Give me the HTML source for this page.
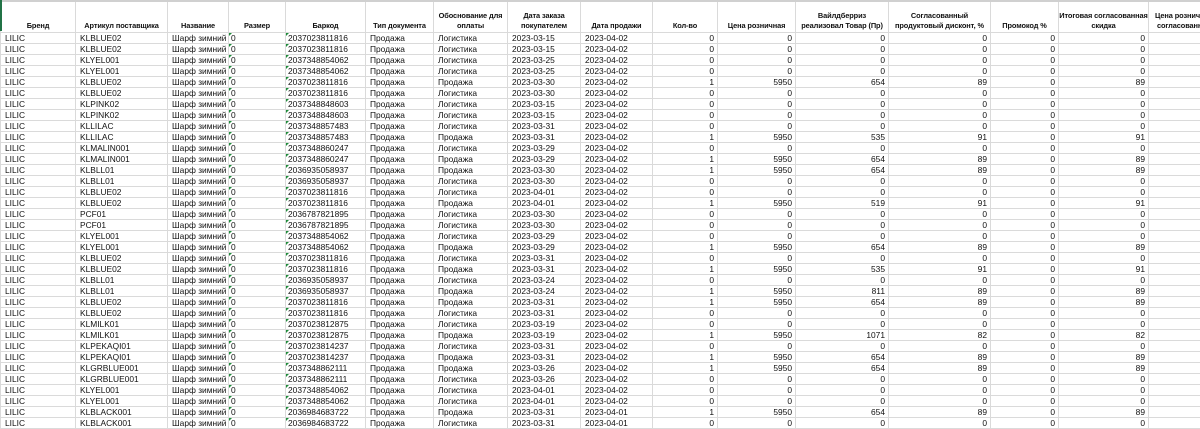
<!DOCTYPE html>
<html><head><meta charset="utf-8"><style>
body{margin:0;background:#fff;width:1200px;height:421px;overflow:hidden;position:relative;font-family:"Liberation Sans","DejaVu Sans",sans-serif;}
.top{position:absolute;left:0;top:0;width:1200px;height:2px;background:#d0d0d0}
.gl{position:absolute;left:0;top:0;width:2px;height:31px;background:#217346}
table{position:absolute;left:0;top:0;border-collapse:collapse;table-layout:fixed;width:1250px}
td{border:1px solid #dadada;height:10px;padding:0 2px 0 4px;font-size:8.4px;line-height:10px;white-space:nowrap;overflow:hidden;color:#111}
tr.h td{height:30px;font-weight:bold;text-align:center;vertical-align:bottom;white-space:nowrap;line-height:10px;padding:0 0 1px 0;font-size:7.4px;letter-spacing:-0.1px}
td.n{text-align:right;padding-right:3px}
td.g{position:relative}
td.g:before{content:"";position:absolute;left:0;top:0;border-top:3px solid #1e8c3a;border-right:3px solid transparent}
td.z{padding-left:2px}
</style></head><body>
<table>
<colgroup><col style="width:75px"><col style="width:92px"><col style="width:61px"><col style="width:57px"><col style="width:80px"><col style="width:68px"><col style="width:74px"><col style="width:73px"><col style="width:72px"><col style="width:65px"><col style="width:78px"><col style="width:93px"><col style="width:102px"><col style="width:68px"><col style="width:90px"><col style="width:102px"></colgroup>
<tr class="h"><td>Бренд</td><td>Артикул поставщика</td><td>Название</td><td>Размер</td><td>Баркод</td><td>Тип документа</td><td>Обоснование для<br>оплаты</td><td>Дата заказа<br>покупателем</td><td>Дата продажи</td><td>Кол-во</td><td>Цена розничная</td><td>Вайлдберриз<br>реализовал Товар (Пр)</td><td>Согласованный<br>продуктовый дисконт, %</td><td>Промокод %</td><td>Итоговая согласованная<br>скидка</td><td style="text-align:left;padding-left:6px">Цена розничная с<br>&nbsp;согласованной</td></tr>
<tr><td>LILIC</td><td>KLBLUE02</td><td>Шарф зимний оф</td><td class="g z">0</td><td class="g z">2037023811816</td><td>Продажа</td><td>Логистика</td><td>2023-03-15</td><td>2023-04-02</td><td class="n">0</td><td class="n">0</td><td class="n">0</td><td class="n">0</td><td class="n">0</td><td class="n">0</td><td></td></tr>
<tr><td>LILIC</td><td>KLBLUE02</td><td>Шарф зимний оф</td><td class="g z">0</td><td class="g z">2037023811816</td><td>Продажа</td><td>Логистика</td><td>2023-03-15</td><td>2023-04-02</td><td class="n">0</td><td class="n">0</td><td class="n">0</td><td class="n">0</td><td class="n">0</td><td class="n">0</td><td></td></tr>
<tr><td>LILIC</td><td>KLYEL001</td><td>Шарф зимний оф</td><td class="g z">0</td><td class="g z">2037348854062</td><td>Продажа</td><td>Логистика</td><td>2023-03-25</td><td>2023-04-02</td><td class="n">0</td><td class="n">0</td><td class="n">0</td><td class="n">0</td><td class="n">0</td><td class="n">0</td><td></td></tr>
<tr><td>LILIC</td><td>KLYEL001</td><td>Шарф зимний оф</td><td class="g z">0</td><td class="g z">2037348854062</td><td>Продажа</td><td>Логистика</td><td>2023-03-25</td><td>2023-04-02</td><td class="n">0</td><td class="n">0</td><td class="n">0</td><td class="n">0</td><td class="n">0</td><td class="n">0</td><td></td></tr>
<tr><td>LILIC</td><td>KLBLUE02</td><td>Шарф зимний оф</td><td class="g z">0</td><td class="g z">2037023811816</td><td>Продажа</td><td>Продажа</td><td>2023-03-30</td><td>2023-04-02</td><td class="n">1</td><td class="n">5950</td><td class="n">654</td><td class="n">89</td><td class="n">0</td><td class="n">89</td><td></td></tr>
<tr><td>LILIC</td><td>KLBLUE02</td><td>Шарф зимний оф</td><td class="g z">0</td><td class="g z">2037023811816</td><td>Продажа</td><td>Логистика</td><td>2023-03-30</td><td>2023-04-02</td><td class="n">0</td><td class="n">0</td><td class="n">0</td><td class="n">0</td><td class="n">0</td><td class="n">0</td><td></td></tr>
<tr><td>LILIC</td><td>KLPINK02</td><td>Шарф зимний оф</td><td class="g z">0</td><td class="g z">2037348848603</td><td>Продажа</td><td>Логистика</td><td>2023-03-15</td><td>2023-04-02</td><td class="n">0</td><td class="n">0</td><td class="n">0</td><td class="n">0</td><td class="n">0</td><td class="n">0</td><td></td></tr>
<tr><td>LILIC</td><td>KLPINK02</td><td>Шарф зимний оф</td><td class="g z">0</td><td class="g z">2037348848603</td><td>Продажа</td><td>Логистика</td><td>2023-03-15</td><td>2023-04-02</td><td class="n">0</td><td class="n">0</td><td class="n">0</td><td class="n">0</td><td class="n">0</td><td class="n">0</td><td></td></tr>
<tr><td>LILIC</td><td>KLLILAC</td><td>Шарф зимний оф</td><td class="g z">0</td><td class="g z">2037348857483</td><td>Продажа</td><td>Логистика</td><td>2023-03-31</td><td>2023-04-02</td><td class="n">0</td><td class="n">0</td><td class="n">0</td><td class="n">0</td><td class="n">0</td><td class="n">0</td><td></td></tr>
<tr><td>LILIC</td><td>KLLILAC</td><td>Шарф зимний оф</td><td class="g z">0</td><td class="g z">2037348857483</td><td>Продажа</td><td>Продажа</td><td>2023-03-31</td><td>2023-04-02</td><td class="n">1</td><td class="n">5950</td><td class="n">535</td><td class="n">91</td><td class="n">0</td><td class="n">91</td><td></td></tr>
<tr><td>LILIC</td><td>KLMALIN001</td><td>Шарф зимний оф</td><td class="g z">0</td><td class="g z">2037348860247</td><td>Продажа</td><td>Логистика</td><td>2023-03-29</td><td>2023-04-02</td><td class="n">0</td><td class="n">0</td><td class="n">0</td><td class="n">0</td><td class="n">0</td><td class="n">0</td><td></td></tr>
<tr><td>LILIC</td><td>KLMALIN001</td><td>Шарф зимний оф</td><td class="g z">0</td><td class="g z">2037348860247</td><td>Продажа</td><td>Продажа</td><td>2023-03-29</td><td>2023-04-02</td><td class="n">1</td><td class="n">5950</td><td class="n">654</td><td class="n">89</td><td class="n">0</td><td class="n">89</td><td></td></tr>
<tr><td>LILIC</td><td>KLBLL01</td><td>Шарф зимний оф</td><td class="g z">0</td><td class="g z">2036935058937</td><td>Продажа</td><td>Продажа</td><td>2023-03-30</td><td>2023-04-02</td><td class="n">1</td><td class="n">5950</td><td class="n">654</td><td class="n">89</td><td class="n">0</td><td class="n">89</td><td></td></tr>
<tr><td>LILIC</td><td>KLBLL01</td><td>Шарф зимний оф</td><td class="g z">0</td><td class="g z">2036935058937</td><td>Продажа</td><td>Логистика</td><td>2023-03-30</td><td>2023-04-02</td><td class="n">0</td><td class="n">0</td><td class="n">0</td><td class="n">0</td><td class="n">0</td><td class="n">0</td><td></td></tr>
<tr><td>LILIC</td><td>KLBLUE02</td><td>Шарф зимний оф</td><td class="g z">0</td><td class="g z">2037023811816</td><td>Продажа</td><td>Логистика</td><td>2023-04-01</td><td>2023-04-02</td><td class="n">0</td><td class="n">0</td><td class="n">0</td><td class="n">0</td><td class="n">0</td><td class="n">0</td><td></td></tr>
<tr><td>LILIC</td><td>KLBLUE02</td><td>Шарф зимний оф</td><td class="g z">0</td><td class="g z">2037023811816</td><td>Продажа</td><td>Продажа</td><td>2023-04-01</td><td>2023-04-02</td><td class="n">1</td><td class="n">5950</td><td class="n">519</td><td class="n">91</td><td class="n">0</td><td class="n">91</td><td></td></tr>
<tr><td>LILIC</td><td>PCF01</td><td>Шарф зимний оф</td><td class="g z">0</td><td class="g z">2036787821895</td><td>Продажа</td><td>Логистика</td><td>2023-03-30</td><td>2023-04-02</td><td class="n">0</td><td class="n">0</td><td class="n">0</td><td class="n">0</td><td class="n">0</td><td class="n">0</td><td></td></tr>
<tr><td>LILIC</td><td>PCF01</td><td>Шарф зимний оф</td><td class="g z">0</td><td class="g z">2036787821895</td><td>Продажа</td><td>Логистика</td><td>2023-03-30</td><td>2023-04-02</td><td class="n">0</td><td class="n">0</td><td class="n">0</td><td class="n">0</td><td class="n">0</td><td class="n">0</td><td></td></tr>
<tr><td>LILIC</td><td>KLYEL001</td><td>Шарф зимний оф</td><td class="g z">0</td><td class="g z">2037348854062</td><td>Продажа</td><td>Логистика</td><td>2023-03-29</td><td>2023-04-02</td><td class="n">0</td><td class="n">0</td><td class="n">0</td><td class="n">0</td><td class="n">0</td><td class="n">0</td><td></td></tr>
<tr><td>LILIC</td><td>KLYEL001</td><td>Шарф зимний оф</td><td class="g z">0</td><td class="g z">2037348854062</td><td>Продажа</td><td>Продажа</td><td>2023-03-29</td><td>2023-04-02</td><td class="n">1</td><td class="n">5950</td><td class="n">654</td><td class="n">89</td><td class="n">0</td><td class="n">89</td><td></td></tr>
<tr><td>LILIC</td><td>KLBLUE02</td><td>Шарф зимний оф</td><td class="g z">0</td><td class="g z">2037023811816</td><td>Продажа</td><td>Логистика</td><td>2023-03-31</td><td>2023-04-02</td><td class="n">0</td><td class="n">0</td><td class="n">0</td><td class="n">0</td><td class="n">0</td><td class="n">0</td><td></td></tr>
<tr><td>LILIC</td><td>KLBLUE02</td><td>Шарф зимний оф</td><td class="g z">0</td><td class="g z">2037023811816</td><td>Продажа</td><td>Продажа</td><td>2023-03-31</td><td>2023-04-02</td><td class="n">1</td><td class="n">5950</td><td class="n">535</td><td class="n">91</td><td class="n">0</td><td class="n">91</td><td></td></tr>
<tr><td>LILIC</td><td>KLBLL01</td><td>Шарф зимний оф</td><td class="g z">0</td><td class="g z">2036935058937</td><td>Продажа</td><td>Логистика</td><td>2023-03-24</td><td>2023-04-02</td><td class="n">0</td><td class="n">0</td><td class="n">0</td><td class="n">0</td><td class="n">0</td><td class="n">0</td><td></td></tr>
<tr><td>LILIC</td><td>KLBLL01</td><td>Шарф зимний оф</td><td class="g z">0</td><td class="g z">2036935058937</td><td>Продажа</td><td>Продажа</td><td>2023-03-24</td><td>2023-04-02</td><td class="n">1</td><td class="n">5950</td><td class="n">811</td><td class="n">89</td><td class="n">0</td><td class="n">89</td><td></td></tr>
<tr><td>LILIC</td><td>KLBLUE02</td><td>Шарф зимний оф</td><td class="g z">0</td><td class="g z">2037023811816</td><td>Продажа</td><td>Продажа</td><td>2023-03-31</td><td>2023-04-02</td><td class="n">1</td><td class="n">5950</td><td class="n">654</td><td class="n">89</td><td class="n">0</td><td class="n">89</td><td></td></tr>
<tr><td>LILIC</td><td>KLBLUE02</td><td>Шарф зимний оф</td><td class="g z">0</td><td class="g z">2037023811816</td><td>Продажа</td><td>Логистика</td><td>2023-03-31</td><td>2023-04-02</td><td class="n">0</td><td class="n">0</td><td class="n">0</td><td class="n">0</td><td class="n">0</td><td class="n">0</td><td></td></tr>
<tr><td>LILIC</td><td>KLMILK01</td><td>Шарф зимний оф</td><td class="g z">0</td><td class="g z">2037023812875</td><td>Продажа</td><td>Логистика</td><td>2023-03-19</td><td>2023-04-02</td><td class="n">0</td><td class="n">0</td><td class="n">0</td><td class="n">0</td><td class="n">0</td><td class="n">0</td><td></td></tr>
<tr><td>LILIC</td><td>KLMILK01</td><td>Шарф зимний оф</td><td class="g z">0</td><td class="g z">2037023812875</td><td>Продажа</td><td>Продажа</td><td>2023-03-19</td><td>2023-04-02</td><td class="n">1</td><td class="n">5950</td><td class="n">1071</td><td class="n">82</td><td class="n">0</td><td class="n">82</td><td></td></tr>
<tr><td>LILIC</td><td>KLPEKAQI01</td><td>Шарф зимний оф</td><td class="g z">0</td><td class="g z">2037023814237</td><td>Продажа</td><td>Логистика</td><td>2023-03-31</td><td>2023-04-02</td><td class="n">0</td><td class="n">0</td><td class="n">0</td><td class="n">0</td><td class="n">0</td><td class="n">0</td><td></td></tr>
<tr><td>LILIC</td><td>KLPEKAQI01</td><td>Шарф зимний оф</td><td class="g z">0</td><td class="g z">2037023814237</td><td>Продажа</td><td>Продажа</td><td>2023-03-31</td><td>2023-04-02</td><td class="n">1</td><td class="n">5950</td><td class="n">654</td><td class="n">89</td><td class="n">0</td><td class="n">89</td><td></td></tr>
<tr><td>LILIC</td><td>KLGRBLUE001</td><td>Шарф зимний оф</td><td class="g z">0</td><td class="g z">2037348862111</td><td>Продажа</td><td>Продажа</td><td>2023-03-26</td><td>2023-04-02</td><td class="n">1</td><td class="n">5950</td><td class="n">654</td><td class="n">89</td><td class="n">0</td><td class="n">89</td><td></td></tr>
<tr><td>LILIC</td><td>KLGRBLUE001</td><td>Шарф зимний оф</td><td class="g z">0</td><td class="g z">2037348862111</td><td>Продажа</td><td>Логистика</td><td>2023-03-26</td><td>2023-04-02</td><td class="n">0</td><td class="n">0</td><td class="n">0</td><td class="n">0</td><td class="n">0</td><td class="n">0</td><td></td></tr>
<tr><td>LILIC</td><td>KLYEL001</td><td>Шарф зимний оф</td><td class="g z">0</td><td class="g z">2037348854062</td><td>Продажа</td><td>Логистика</td><td>2023-04-01</td><td>2023-04-02</td><td class="n">0</td><td class="n">0</td><td class="n">0</td><td class="n">0</td><td class="n">0</td><td class="n">0</td><td></td></tr>
<tr><td>LILIC</td><td>KLYEL001</td><td>Шарф зимний оф</td><td class="g z">0</td><td class="g z">2037348854062</td><td>Продажа</td><td>Логистика</td><td>2023-04-01</td><td>2023-04-02</td><td class="n">0</td><td class="n">0</td><td class="n">0</td><td class="n">0</td><td class="n">0</td><td class="n">0</td><td></td></tr>
<tr><td>LILIC</td><td>KLBLACK001</td><td>Шарф зимний оф</td><td class="g z">0</td><td class="g z">2036984683722</td><td>Продажа</td><td>Продажа</td><td>2023-03-31</td><td>2023-04-01</td><td class="n">1</td><td class="n">5950</td><td class="n">654</td><td class="n">89</td><td class="n">0</td><td class="n">89</td><td></td></tr>
<tr><td>LILIC</td><td>KLBLACK001</td><td>Шарф зимний оф</td><td class="g z">0</td><td class="g z">2036984683722</td><td>Продажа</td><td>Логистика</td><td>2023-03-31</td><td>2023-04-01</td><td class="n">0</td><td class="n">0</td><td class="n">0</td><td class="n">0</td><td class="n">0</td><td class="n">0</td><td></td></tr>
</table>
<div class="top"></div><div class="gl"></div>
</body></html>
